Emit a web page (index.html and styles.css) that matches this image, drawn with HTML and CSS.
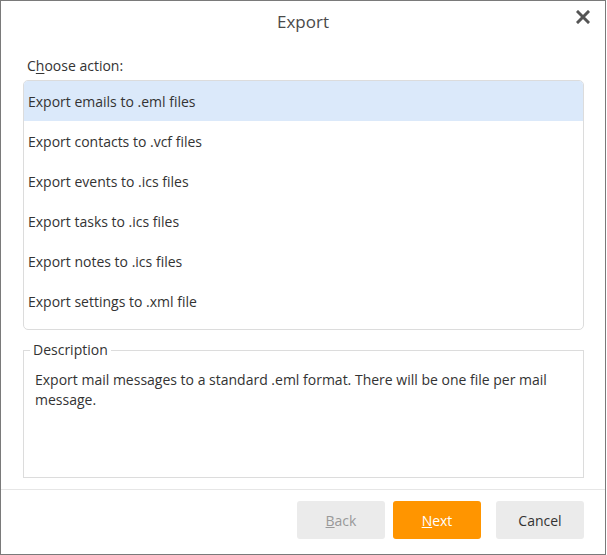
FILE: index.html
```html
<!DOCTYPE html>
<html>
<head>
<meta charset="utf-8">
<link rel="stylesheet" href="styles.css">
</head>
<body>
<div class="dialog">
  <div class="titlebar">
    <span class="title">Export</span>
    <span class="close" aria-label="Close">
      <svg width="14" height="14" viewBox="0 0 14 14"><path d="M2 2 L12 12 M12 2 L2 12" stroke="#555" stroke-width="3" stroke-linecap="square" fill="none"/></svg>
    </span>
  </div>
  <div class="content">
    <div class="label">C<u>h</u>oose action:</div>
    <div class="list">
      <div class="row selected">Export emails to .eml files</div>
      <div class="row">Export contacts to .vcf files</div>
      <div class="row">Export events to .ics files</div>
      <div class="row">Export tasks to .ics files</div>
      <div class="row">Export notes to .ics files</div>
      <div class="row">Export settings to .xml file</div>
    </div>
    <fieldset class="desc">
      <legend>Description</legend>
      <p>Export mail messages to a standard .eml format. There will be one file per mail message.</p>
    </fieldset>
  </div>
  <div class="footer">
    <button class="btn disabled"><u>B</u>ack</button>
    <button class="btn primary"><u>N</u>ext</button>
    <button class="btn cancel">Cancel</button>
  </div>
</div>
</body>
</html>
```
FILE: styles.css
```css
html, body {
  margin: 0;
  padding: 0;
  background: #fff;
}
body {
  font-family: "Open Sans", "Noto Sans", sans-serif;
  color: #333;
}
.dialog {
  box-sizing: border-box;
  width: 606px;
  height: 555px;
  border: 1px solid #7a7a7a;
  display: flex;
  flex-direction: column;
  background: #fff;
}
.titlebar {
  height: 44px;
  display: flex;
  align-items: center;
  justify-content: center;
  position: relative;
}
.title {
  font-size: 17px;
  color: #4a4a4a;
  margin-top: -4px;
}
.close {
  position: absolute;
  right: 15px;
  top: 9px;
  width: 14px;
  height: 14px;
  display: block;
}
.close svg { display: block; }
.content {
  padding: 0 21px 0 22px;
  flex: 1;
}
.label {
  font-size: 14px;
  line-height: 20px;
  margin: 11px 0 0 4px;
  color: #333;
}
.label u { text-underline-offset: 2px; }
.list {
  margin-top: 4px;
  border: 1px solid #dcdcdc;
  border-radius: 5px;
  height: 250px;
  box-sizing: border-box;
  overflow: hidden;
}
.row {
  box-sizing: border-box;
  height: 40px;
  padding-top: 2px;
  line-height: 38px;
  padding-left: 4px;
  font-size: 14px;
  color: #333;
}
.row.selected {
  background: #dbe9fa;
}
.desc {
  margin: 12px 0 0 0;
  border: 1px solid #dcdcdc;
  padding: 0 10px 0 11px;
  height: 136px;
  box-sizing: border-box;
  min-width: 0;
}
.desc legend {
  font-size: 14px;
  padding: 0 3px 0 3px;
  margin-left: -5px;
  color: #333;
  line-height: 16px;
}
.desc p {
  margin: 12px 0 0 0;
  font-size: 14px;
  line-height: 20px;
  color: #333;
}
.footer {
  border-top: 1px solid #e6e6e6;
  height: 65px;
  box-sizing: border-box;
  display: flex;
  justify-content: flex-end;
  align-items: flex-start;
  padding: 11px 21px 0 0;
  gap: 8px;
}
.btn {
  width: 88px;
  height: 38px;
  border: none;
  border-radius: 3px;
  font-family: "Open Sans", "Noto Sans", sans-serif;
  font-size: 14px;
  background: #ebebeb;
  color: #333;
  padding: 0;
}
.btn.disabled { color: #999; }
.btn.primary { background: #ff9500; color: #fff; }
.btn.cancel { margin-left: 7px; }
```
